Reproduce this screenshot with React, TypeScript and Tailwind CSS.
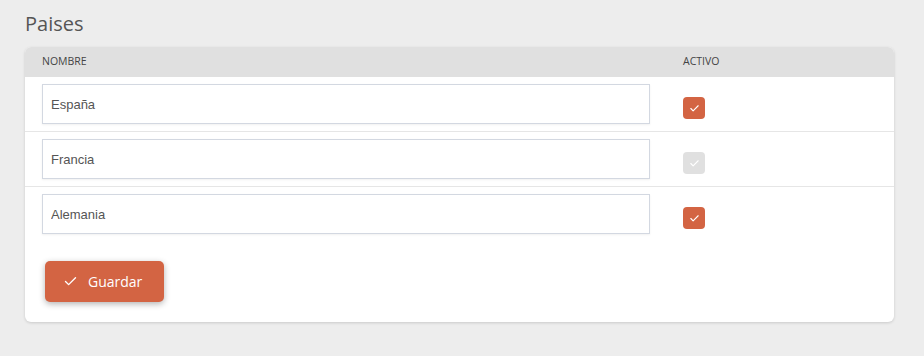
import { Check } from "lucide-react";

const paises = [
  { nombre: "España", activo: true },
  { nombre: "Francia", activo: false },
  { nombre: "Alemania", activo: true },
];

export default function App() {
  return (
    <div className="min-h-[356px] bg-[#ededed] pl-[25px] pr-[30px] pt-[10px] font-['Open_Sans',sans-serif]">
      <h1 className="text-[20px] leading-[27px] text-[#555] mb-[10px]">Paises</h1>

      <div className="bg-white rounded-[6px] shadow-[0_1px_3px_rgba(0,0,0,0.15)] pb-[20px]">
        {/* Header */}
        <div className="grid grid-cols-[658px_1fr] h-[30px] items-center bg-[#e0e0e0] rounded-t-[6px] text-[10.5px] text-[#444] uppercase">
          <span className="pl-[17px]">Nombre</span>
          <span>Activo</span>
        </div>

        {/* Rows */}
        {paises.map((pais, index) => (
          <div
            key={index}
            className={`grid grid-cols-[658px_1fr] h-[55px] ${
              index < paises.length - 1 ? "border-b border-[#e6e6e6]" : ""
            }`}
          >
            <div className="pl-[17px] pt-[7px]">
              <input
                defaultValue={pais.nombre}
                className="w-[608px] h-[40px] px-[8px] border border-[#d3d8e1] shadow-[0_1px_2px_rgba(0,0,0,0.06)] font-['Liberation_Sans',sans-serif] text-[13px] text-[#555] outline-none"
              />
            </div>
            <div className="pt-[20px]">
              <span
                className={`flex h-[22px] w-[22px] items-center justify-center rounded-[4px] ${
                  pais.activo ? "bg-[#d36443]" : "bg-[#e0e0e0]"
                }`}
              >
                <Check className="h-[11px] w-[11px] text-white" strokeWidth={2.4} />
              </span>
            </div>
          </div>
        ))}

        {/* Save */}
        <div className="pl-[20px] pt-[19px]">
          <button className="flex h-[41px] w-[119px] items-center gap-[10px] rounded-[5px] bg-[#d36443] pl-[18px] text-[14px] text-white shadow-[0_2px_6px_rgba(0,0,0,0.3)]">
            <Check className="h-[15px] w-[15px]" strokeWidth={2.2} />
            Guardar
          </button>
        </div>
      </div>
    </div>
  );
}
